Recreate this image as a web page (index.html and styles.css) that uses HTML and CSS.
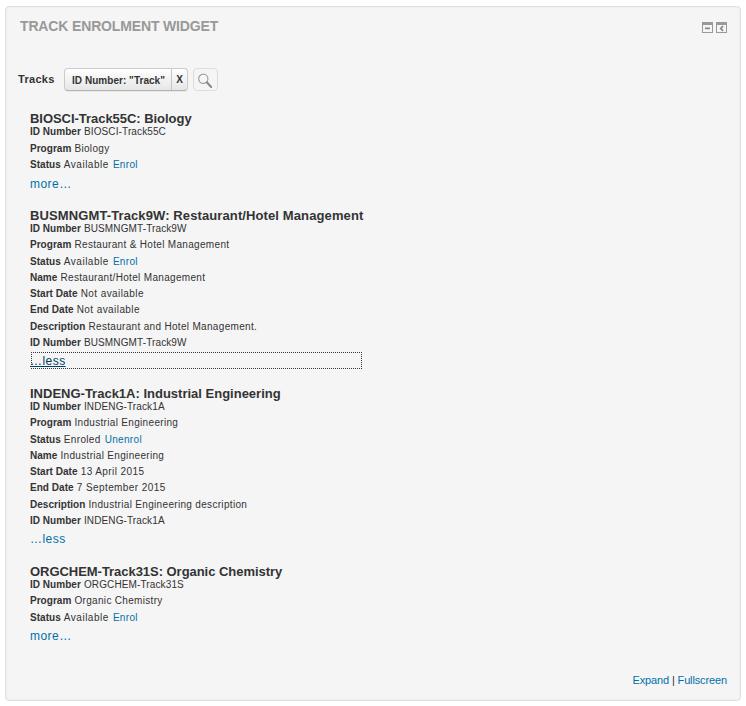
FILE: index.html
```html
<!DOCTYPE html>
<html lang="en">
<head>
<meta charset="utf-8">
<title>Track enrolment widget</title>
<link rel="stylesheet" href="styles.css">
</head>
<body>
<section class="widget">
  <header class="header">
    <h2>TRACK ENROLMENT WIDGET</h2>
    <div class="controls">
      <svg width="11" height="11" viewBox="0 0 11 11"><path d="M0 0H11V11H0ZM1 3V10H10V3Z" fill="#999" fill-rule="evenodd"/><path d="M3 5.5H8V7.2H3Z" fill="#888"/></svg>
      <svg width="11" height="11" viewBox="0 0 11 11"><path d="M0 0H11V11H0ZM1 3V10H10V3Z" fill="#999" fill-rule="evenodd"/><path d="M7 4L4.8 6.5L7 9" fill="none" stroke="#888" stroke-width="1.8"/></svg>
    </div>
  </header>
  <div class="filters">
    <span class="label">Tracks</span>
    <span class="chip"><span class="chip-text">ID Number: "Track"</span><span class="chip-x">X</span></span>
    <span class="search"><svg width="17" height="17" viewBox="0 0 17 17"><circle cx="5.3" cy="5.8" r="4.6" fill="#f7f7f7" stroke="#a0a0a0" stroke-width="1.2"/><path d="M8.8 9.2L13.2 14" stroke="#888" stroke-width="2" stroke-linecap="round"/></svg></span>
  </div>
  <div class="tracks">
    <article class="track">
      <h3 class="t1">BIOSCI-Track55C: Biology</h3>
      <p><b>ID Number</b> <span class="code">BIOSCI-Track55C</span></p>
      <p><b>Program</b> <span>Biology</span></p>
      <p><b>Status</b> <span class="state">Available</span> <a>Enrol</a></p>
      <a class="toggle">more…</a>
    </article>
    <article class="track">
      <h3 class="t2">BUSMNGMT-Track9W: Restaurant/Hotel Management</h3>
      <p><b>ID Number</b> <span class="code">BUSMNGMT-Track9W</span></p>
      <p><b>Program</b> <span>Restaurant &amp; Hotel Management</span></p>
      <p><b>Status</b> <span class="state">Available</span> <a>Enrol</a></p>
      <p><b>Name</b> <span>Restaurant/Hotel Management</span></p>
      <p><b>Start Date</b> <span class="date">Not available</span></p>
      <p><b>End Date</b> <span class="date">Not available</span></p>
      <p><b>Description</b> <span>Restaurant and Hotel Management.</span></p>
      <p><b>ID Number</b> <span class="code">BUSMNGMT-Track9W</span></p>
      <a class="toggle focused">…less</a>
    </article>
    <article class="track">
      <h3 class="t3">INDENG-Track1A: Industrial Engineering</h3>
      <p><b>ID Number</b> <span class="code">INDENG-Track1A</span></p>
      <p><b>Program</b> <span>Industrial Engineering</span></p>
      <p><b>Status</b> <span>Enroled</span> <a>Unenrol</a></p>
      <p><b>Name</b> <span>Industrial Engineering</span></p>
      <p><b>Start Date</b> <span class="date">13 April 2015</span></p>
      <p><b>End Date</b> <span class="date">7 September 2015</span></p>
      <p><b>Description</b> <span>Industrial Engineering description</span></p>
      <p><b>ID Number</b> <span class="code">INDENG-Track1A</span></p>
      <a class="toggle">…less</a>
    </article>
    <article class="track">
      <h3 class="t4">ORGCHEM-Track31S: Organic Chemistry</h3>
      <p><b>ID Number</b> <span class="code">ORGCHEM-Track31S</span></p>
      <p><b>Program</b> <span>Organic Chemistry</span></p>
      <p><b>Status</b> <span class="state">Available</span> <a>Enrol</a></p>
      <a class="toggle">more…</a>
    </article>
  </div>
  <footer class="footer"><a>Expand</a> | <a>Fullscreen</a></footer>
</section>
</body>
</html>
```
FILE: styles.css
```css
* { box-sizing: border-box; }
body { margin: 0; background: #fff; color: #333; font-family: "Liberation Sans", Arial, sans-serif; }
h2, h3, p { margin: 0; }
a { color: #0070a8; }
.widget {
  width: 736px; height: 695px; margin: 6px 0 0 5px; padding: 0 13px 0 12px;
  display: flex; flex-direction: column;
  background: #f5f5f5; border: 1px solid #e0e0e0; border-radius: 4px;
  box-shadow: inset 0 0 2px rgba(0,0,0,.08);
}
.header { display: flex; justify-content: space-between; height: 61px; padding: 11px 0 0 2px; }
.header h2 { font-size: 14px; line-height: 16px; color: #999; letter-spacing: -.15px; }
.controls { display: flex; gap: 3px; padding-top: 4px; }
.controls svg { display: block; }
.filters { display: flex; height: 44px; align-items: flex-start; font-weight: bold; }
.label { width: 46px; font-size: 11px; line-height: 23px; letter-spacing: .3px; }
.chip {
  display: flex; width: 124px; height: 23px; border: 1px solid #ccc; border-bottom-color: #b3b3b3; border-radius: 4px;
  background: linear-gradient(#fff, #e6e6e6); font-size: 10px; line-height: 23px; box-shadow: 0 1px 1px rgba(0,0,0,.06);
}
.chip-text { width: 107px; padding-left: 7px; border-right: 1px solid #c4c4c4; white-space: nowrap; letter-spacing: .04px; }
.chip-x { flex: 1; text-align: center; line-height: 22px; }
.search { width: 25px; height: 23px; margin-left: 5px; padding: 4px 0 0 4px; border: 1px solid #ddd; border-radius: 4px; }
.search svg { display: block; }
.tracks { padding-left: 12px; flex: 1; }
.track { width: 333px; height: 97px; }
.track:nth-child(2), .track:nth-child(3) { height: 178px; }
.track h3 { font-size: 13px; line-height: 13px; height: 12px; white-space: nowrap; }
.track .t1, .track .t4 { letter-spacing: -.04px; }
.track .t2 { letter-spacing: .11px; }
.track p { font-size: 10px; line-height: 16px; height: 16px; white-space: nowrap; letter-spacing: .32px; }
.track b { letter-spacing: .03px; }
.track p:nth-of-type(3), .track p:nth-of-type(7) { margin-top: 1px; }
.track:first-child p:nth-of-type(2) { margin-top: 1px; }
.track:first-child p:nth-of-type(3) { margin-top: 0; }
.track .code { letter-spacing: .12px; }
.track .state { letter-spacing: .5px; }
.track .date { letter-spacing: .42px; }
.track p a { margin-left: 1px; }
.toggle { display: block; height: 17px; margin-top: 1px; font-size: 12px; line-height: 19px; letter-spacing: .45px; }
.track:first-child .toggle { margin-top: 2px; }
.focused { width: 331px; margin-left: 1px; text-indent: -1px; outline: 1px dotted #333; outline-offset: -1px; color: #004060; text-decoration: underline; }
.footer { height: 27px; text-align: right; font-size: 11px; line-height: 15px; letter-spacing: -.13px; }
```
